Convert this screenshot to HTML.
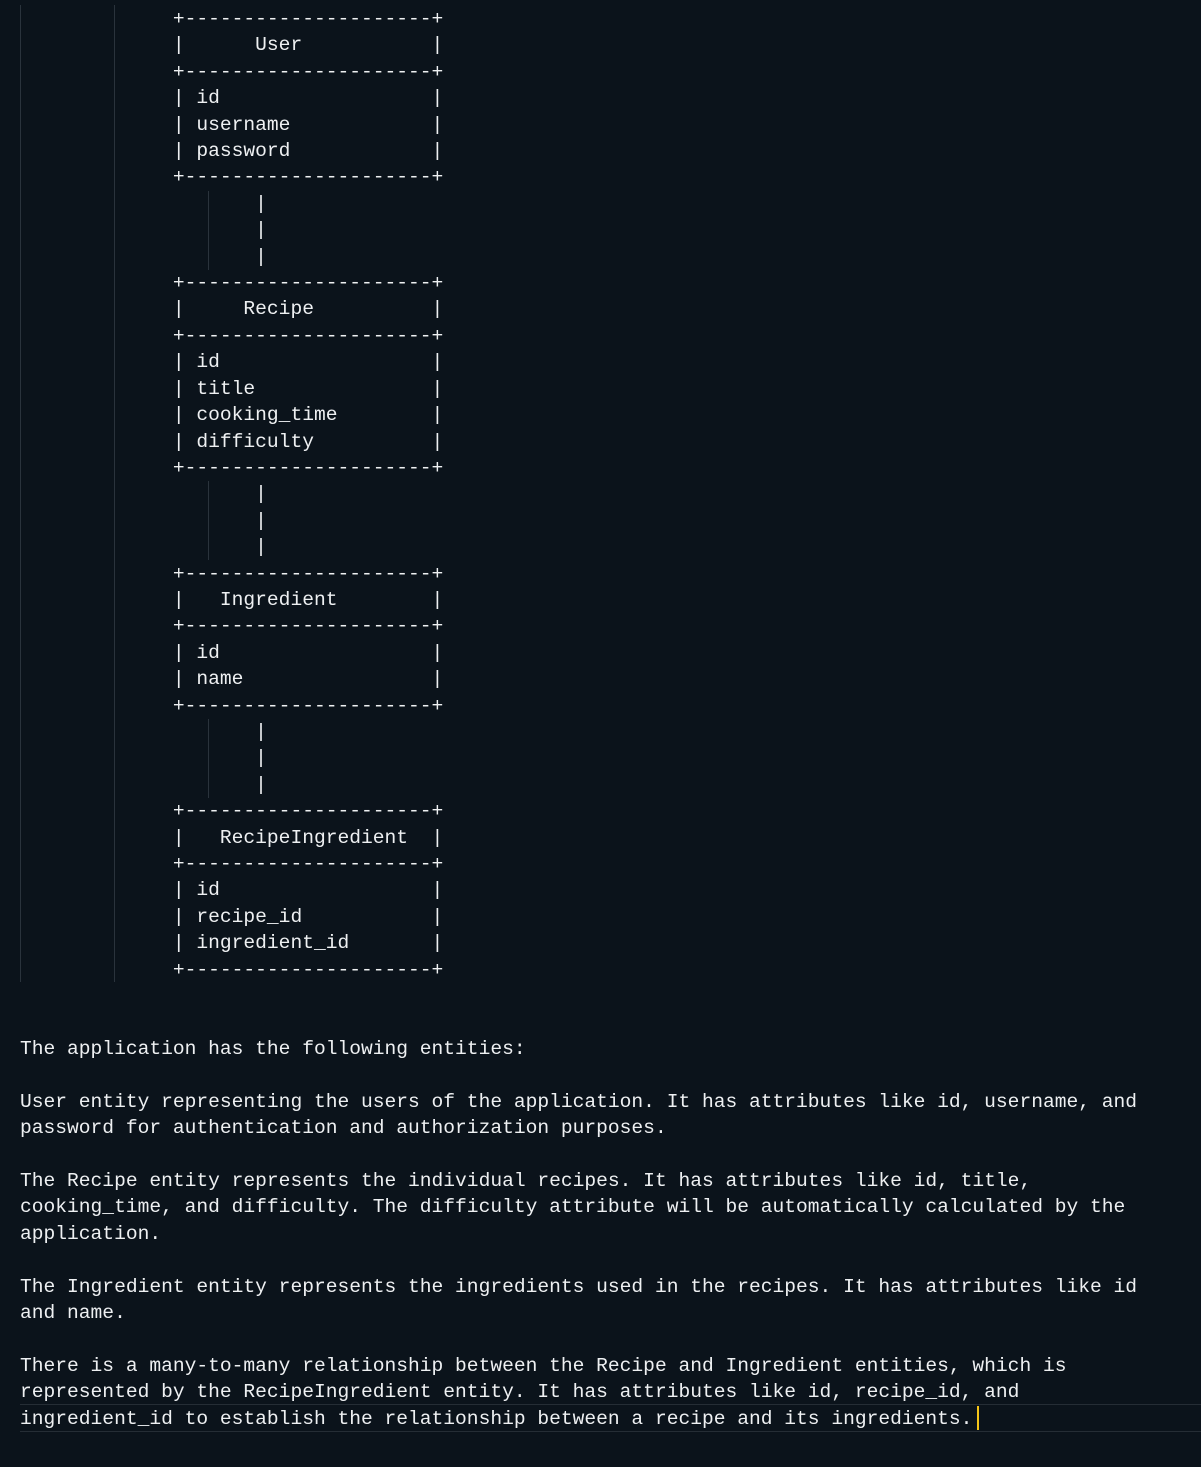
<!DOCTYPE html>
<html><head><meta charset="utf-8"><style>
html,body{margin:0;padding:0;background:#0b131b;width:1201px;height:1467px;overflow:hidden}
pre{position:absolute;left:20px;top:6px;margin:0;font-family:"Liberation Mono",monospace;font-size:19.6px;line-height:26.4px;color:#eef0f2;white-space:pre}
.g{position:absolute;width:1px;background:#2a333c}
.hl{position:absolute;left:20px;right:0;top:1404px;height:26px;border-top:1px solid #252d35;border-bottom:1px solid #252d35}
.cur{position:absolute;left:977px;top:1406px;width:2px;height:24px;background:#f5c518}
</style></head><body>
<div class="g" style="left:20px;top:5px;height:977px"></div>
<div class="g" style="left:114px;top:5px;height:977px"></div>
<div class="g" style="left:208px;top:191px;height:79px"></div>
<div class="g" style="left:208px;top:481px;height:79px"></div>
<div class="g" style="left:208px;top:719px;height:79px"></div>
<div class="hl"></div>
<pre>             +---------------------+
             |      User           |
             +---------------------+
             | id                  |
             | username            |
             | password            |
             +---------------------+
                    |
                    |
                    |
             +---------------------+
             |     Recipe          |
             +---------------------+
             | id                  |
             | title               |
             | cooking_time        |
             | difficulty          |
             +---------------------+
                    |
                    |
                    |
             +---------------------+
             |   Ingredient        |
             +---------------------+
             | id                  |
             | name                |
             +---------------------+
                    |
                    |
                    |
             +---------------------+
             |   RecipeIngredient  |
             +---------------------+
             | id                  |
             | recipe_id           |
             | ingredient_id       |
             +---------------------+


The application has the following entities:

User entity representing the users of the application. It has attributes like id, username, and
password for authentication and authorization purposes.

The Recipe entity represents the individual recipes. It has attributes like id, title,
cooking_time, and difficulty. The difficulty attribute will be automatically calculated by the
application.

The Ingredient entity represents the ingredients used in the recipes. It has attributes like id
and name.

There is a many-to-many relationship between the Recipe and Ingredient entities, which is
represented by the RecipeIngredient entity. It has attributes like id, recipe_id, and
ingredient_id to establish the relationship between a recipe and its ingredients.</pre>
<div class="cur"></div>
</body></html>
